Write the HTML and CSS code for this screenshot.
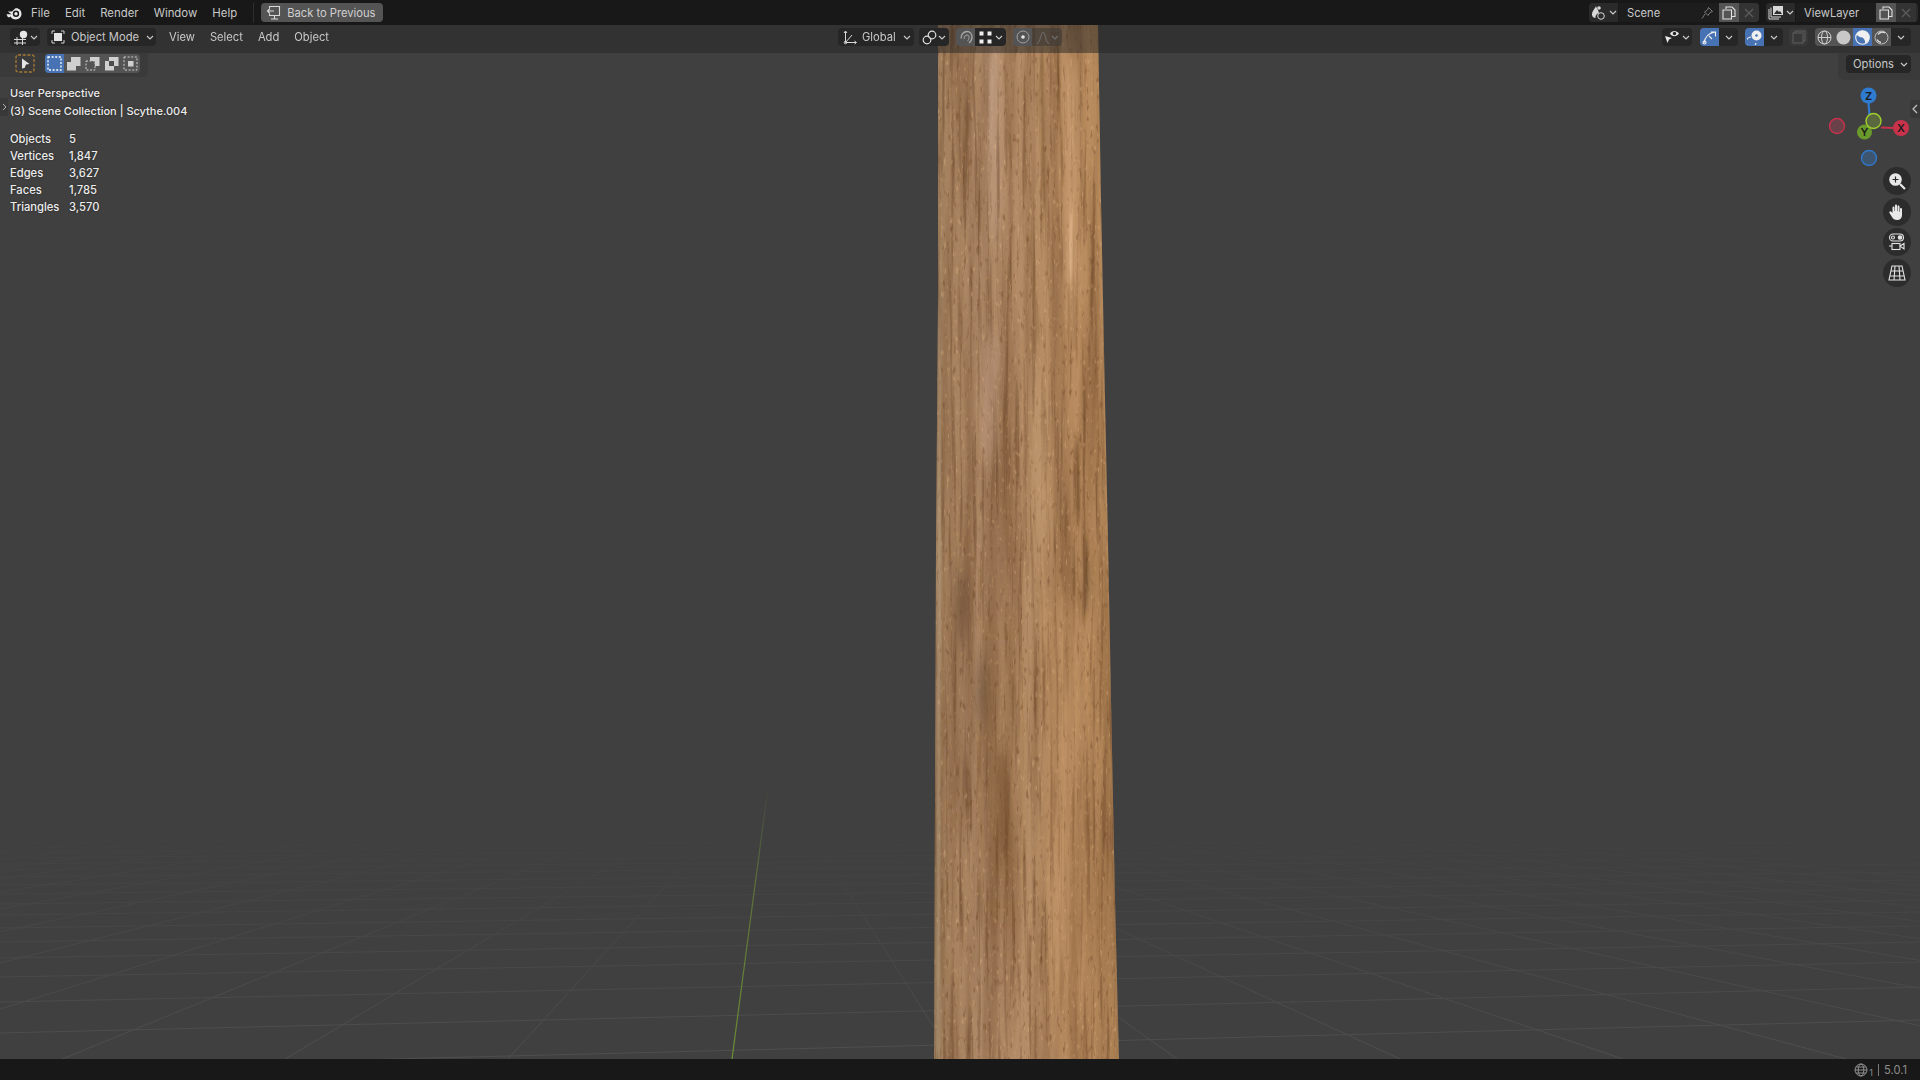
FILE: index.html
```html
<!DOCTYPE html>
<html lang="en">
<head>
    <meta charset="UTF-8">
    <title>Blender</title>
    <link rel="stylesheet" href="styles.css">
</head>
<body>
    <svg class="defs" width="0" height="0">
        <symbol id="chev" viewBox="0 0 8 5"><path d="M1 1l3 3 3-3" fill="none" stroke="currentColor" stroke-width="1.2"/></symbol>
    </svg>

    <!-- top bar -->
    <div class="topbar">
        <svg class="logo" width="16" height="16" viewBox="0 0 16 16">
            <path d="M0.5 9.3L5.5 9.2 1.8 6.4 6 6.4 9.5 3.2C12.8 2.7 15.5 5.2 15.5 8.7 15.5 12 13 14.4 9.8 14.4 7.4 14.4 5.4 13.2 4.6 11.4L3 12.6 1.6 11.8Z" fill="#e8e8e8"/>
            <circle cx="10" cy="8.8" r="3.2" fill="#181818"/>
            <circle cx="10" cy="8.8" r="1.7" fill="#e8e8e8"/>
        </svg>
        <nav class="menu top-menu">
            <span>File</span><span>Edit</span><span>Render</span><span>Window</span><span>Help</span>
        </nav>
        <div class="top-sep"></div>
        <div class="back-btn">
            <svg width="15" height="15" viewBox="0 0 15 15" fill="none" stroke="#d8d8d8" stroke-width="1.1">
                <path d="M3.5 3V1.5h10v9h-10V9M5 14h7M8.5 10.5V14"/>
                <path d="M8 6H1.5M4 3.5L1.5 6 4 8.500"/>
            </svg>
            <span>Back to Previous</span>
        </div>
        <div class="spacer"></div>
        <div class="datablock scene-block">
            <div class="db-icon">
                <svg width="16" height="15" viewBox="0 0 16 15">
                    <path d="M5 1C4 4 1 6 1 9.500 1 11.500 2.500 13 4.500 13 4 11 5.500 8.500 8 8 7.500 5 5.500 3.500 5 1Z" fill="#d8d8d8"/>
                    <circle cx="8" cy="3" r="1.800" fill="#d8d8d8"/>
                    <circle cx="10" cy="11" r="3.300" fill="none" stroke="#d8d8d8" stroke-width="1"/>
                </svg>
                <svg class="chev" width="8" height="5"><use href="#chev"/></svg>
            </div>
            <div class="db-field scene-field">
                <span>Scene</span>
                <svg width="13" height="14" viewBox="0 0 13 14" fill="none" stroke="#7c7c7c" stroke-width="1"><path d="M7.500 1.500l4 4-2.500 1-2 3-3.500-3.500 3-2zM4 8l-3 4.500"/></svg>
            </div>
            <div class="db-btn db-copy"><svg width="14" height="14" viewBox="0 0 14 14" fill="none" stroke="#e0e0e0" stroke-width="1.100"><path d="M4 3V1h6l3 3v6.500h-3M1 4h8.500v9H1z"/></svg></div>
            <div class="db-btn db-close"><svg width="10" height="10" viewBox="0 0 10 10" stroke="#5c5c5c" stroke-width="1.200"><path d="M1 1l8 8M9 1l-8 8"/></svg></div>
        </div>
        <div class="datablock layer-block">
            <div class="db-icon">
                <svg width="16" height="15" viewBox="0 0 16 15" fill="none" stroke="#d8d8d8" stroke-width="1">
                    <path d="M1 4v10h10M3 2.500v9.500h10"/>
                    <rect x="5" y="1" width="10" height="9" fill="#d8d8d8" stroke="none"/>
                    <path d="M6 9l3-4 2 2 1-1 2 3z" fill="#282828" stroke="none"/>
                </svg>
                <svg class="chev" width="8" height="5"><use href="#chev"/></svg>
            </div>
            <div class="db-field layer-field"><span>ViewLayer</span></div>
            <div class="db-btn db-copy"><svg width="14" height="14" viewBox="0 0 14 14" fill="none" stroke="#e0e0e0" stroke-width="1.100"><path d="M4 3V1h6l3 3v6.500h-3M1 4h8.500v9H1z"/></svg></div>
            <div class="db-btn db-close"><svg width="10" height="10" viewBox="0 0 10 10" stroke="#5c5c5c" stroke-width="1.200"><path d="M1 1l8 8M9 1l-8 8"/></svg></div>
        </div>
    </div>

    <!-- 3d viewport -->
    <main class="viewport">
        <svg class="scene" width="1920" height="1034" viewBox="0 25 1920 1034">
            <defs>
                <linearGradient id="fade" gradientUnits="userSpaceOnUse" x1="0" y1="815" x2="0" y2="1059">
                    <stop offset="0" stop-color="#fff" stop-opacity="0"/>
                    <stop offset="0.3" stop-color="#fff" stop-opacity="0.3"/>
                    <stop offset="0.7" stop-color="#fff" stop-opacity="0.7"/>
                    <stop offset="1" stop-color="#fff"/>
                </linearGradient>
                <mask id="gridMask" maskUnits="userSpaceOnUse" x="0" y="25" width="1920" height="1034">
                    <rect x="0" y="25" width="1920" height="1034" fill="url(#fade)"/>
                </mask>
                <linearGradient id="greenFade" gradientUnits="userSpaceOnUse" x1="0" y1="785" x2="0" y2="1059">
                    <stop offset="0" stop-color="#6d8f35" stop-opacity="0"/>
                    <stop offset="0.35" stop-color="#6d8f35" stop-opacity="0.6"/>
                    <stop offset="1" stop-color="#6d8f35"/>
                </linearGradient>
                <linearGradient id="woodBase" x1="0" x2="1" y1="0" y2="0">
                    <stop offset="0" stop-color="#8c7a64"/>
                    <stop offset="0.025" stop-color="#9c7d5c"/>
                    <stop offset="0.1" stop-color="#a78260"/>
                    <stop offset="0.3" stop-color="#b08b6a"/>
                    <stop offset="0.55" stop-color="#b58c65"/>
                    <stop offset="0.8" stop-color="#ba8d60"/>
                    <stop offset="0.95" stop-color="#ae8356"/>
                    <stop offset="1" stop-color="#9a7a52"/>
                </linearGradient>
                <clipPath id="handle">
                    <path d="M938 25L1098 25 1101 200 1105 400 1108 540 1111 700 1115 900 1119 1059 934 1059 935 800 936 540 938 300Z"/>
                </clipPath>
                <filter id="grain" filterUnits="userSpaceOnUse" x="930" y="25" width="195" height="1034" color-interpolation-filters="sRGB">
                    <feTurbulence type="fractalNoise" baseFrequency="0.06 0.003" numOctaves="3" seed="11"/>
                    <feColorMatrix values="0 0 0 0 0.42  0 0 0 0 0.27  0 0 0 0 0.15  1.1 0 0 0 -0.42"/>
                </filter>
                <filter id="fibre" filterUnits="userSpaceOnUse" x="930" y="25" width="195" height="1034" color-interpolation-filters="sRGB">
                    <feTurbulence type="fractalNoise" baseFrequency="0.22 0.008" numOctaves="3" seed="31"/>
                    <feColorMatrix values="0 0 0 0 0.38  0 0 0 0 0.24  0 0 0 0 0.13  3 0 0 0 -1.55"/>
                </filter>
                <filter id="pores" filterUnits="userSpaceOnUse" x="930" y="25" width="195" height="1034" color-interpolation-filters="sRGB">
                    <feTurbulence type="fractalNoise" baseFrequency="0.3 0.09" numOctaves="2" seed="4"/>
                    <feColorMatrix values="0 0 0 0 0.44  0 0 0 0 0.28  0 0 0 0 0.16  5 0 0 0 -3.1"/>
                </filter>
                <filter id="flecks" filterUnits="userSpaceOnUse" x="930" y="25" width="195" height="1034" color-interpolation-filters="sRGB">
                    <feTurbulence type="fractalNoise" baseFrequency="0.34 0.12" numOctaves="2" seed="23"/>
                    <feColorMatrix values="0 0 0 0 0.9  0 0 0 0 0.72  0 0 0 0 0.52  0 5 0 0 -3.2"/>
                </filter>
                <filter id="soften"><feGaussianBlur stdDeviation="0.6"/></filter>
                <filter id="blurS"><feGaussianBlur stdDeviation="1.2 8"/></filter>
                <filter id="blurM"><feGaussianBlur stdDeviation="3.500 14"/></filter>
                <filter id="blurL"><feGaussianBlur stdDeviation="6 20"/></filter>
            </defs>

            <rect x="0" y="25" width="1920" height="1034" fill="#404040"/>

            <g mask="url(#gridMask)" stroke="#4f4f4f" stroke-width="1">
                <path fill="none" d="M0 1069L1920 1020M0 1033L1920 987M0 1002L1920 962M0 977L1920 942M0 958L1920 926M0 942L1920 912M0 928L1920 900M0 915L1920 889M0 904L1920 880M0 894L1920 872M0 885L1920 864M0 877L1920 857M0 870L1920 851M0 864L1920 846M0 858L1920 841M0 853L1920 837M0 848L1920 833"/>
                <path fill="none" d="M771 770L-2391 1059M771 770L-2168 1059M771 770L-1945 1059M771 770L-1722 1059M771 770L-1499 1059M771 770L-1276 1059M771 770L-1053 1059M771 770L-830 1059M771 770L-607 1059M771 770L-384 1059M771 770L-161 1059M771 770L62 1059M771 770L285 1059M771 770L508 1059"/>
                <path fill="none" d="M771 770L954 1059M771 770L1177 1059M771 770L1400 1059M771 770L1623 1059M771 770L1846 1059M771 770L2069 1059M771 770L2292 1059M771 770L2515 1059M771 770L2738 1059M771 770L2961 1059M771 770L3184 1059M771 770L3407 1059M771 770L3630 1059M771 770L3853 1059"/>
            </g>
            <path d="M768 787L732 1059" stroke="url(#greenFade)" stroke-width="1.200" fill="none"/>

            <g clip-path="url(#handle)">
                <rect x="930" y="25" width="195" height="1034" fill="url(#woodBase)"/>
                <g filter="url(#soften)">
                    <rect x="930" y="25" width="195" height="1034" filter="url(#grain)"/>
                    <rect x="930" y="25" width="195" height="1034" filter="url(#fibre)" opacity="0.55"/>
                    <rect x="930" y="25" width="195" height="1034" filter="url(#pores)" opacity="0.45"/>
                    <rect x="930" y="25" width="195" height="1034" filter="url(#flecks)" opacity="0.35"/>
                </g>

                <!-- light streaks -->
                <g filter="url(#blurM)">
                    <path d="M986 40L1000 40 998 250 990 230Z" fill="#cfae96" opacity="0.42"/>
                    <path d="M985 330L1000 340 995 470 982 450Z" fill="#c7a68e" opacity="0.4"/>
                    <path d="M1066 60L1078 60 1076 330 1066 330Z" fill="#d9ae80" opacity="0.42"/>
                    <path d="M1030 380L1045 380 1052 540 1034 540Z" fill="#cda57a" opacity="0.3"/>
                    <path d="M1040 600L1080 600 1090 1000 1050 1000Z" fill="#c99a6a" opacity="0.3"/>
                </g>
                <g filter="url(#blurS)">
                    <path d="M1070 210L1073 210 1072 280 1068 280Z" fill="#eec59a" opacity="0.55"/>
                    <path d="M991 60L993 60 992 150 990 150Z" fill="#dcc0aa" opacity="0.4"/>
                    <path d="M939 250L941 250 940 1059 936 1059Z" fill="#c0ad92" opacity="0.5"/>
                </g>
                <!-- dark knots and grain -->
                <g filter="url(#blurM)">
                    <path d="M978 660L988 660 986 720 976 720Z" fill="#665038" opacity="0.55"/>
                    <path d="M994 750L1008 750 1012 860 998 860Z" fill="#70492a" opacity="0.55"/>
                    <path d="M957 580L968 580 966 640 958 640Z" fill="#5e432c" opacity="0.6"/>
                    <path d="M1084 555L1092 555 1090 605 1084 605Z" fill="#664a30" opacity="0.55"/>
                </g>
                <g filter="url(#blurS)">
                    <path d="M966 100L969 100 967 190 965 190Z" fill="#5c3d22" opacity="0.55"/>
                    <path d="M1040 50L1043 50 1046 210 1043 210Z" fill="#6e4a28" opacity="0.55"/>
                    <path d="M1056 50L1058 50 1064 180 1062 180Z" fill="#6e4a28" opacity="0.45"/>
                    <path d="M1076 440L1078 440 1080 520 1077 520Z" fill="#5c3a1e" opacity="0.7"/>
                    <path d="M1003 60L1005 60 1012 160 1010 160Z" fill="#7a5430" opacity="0.45"/>
                    <path d="M1029 240L1031 240 1040 340 1038 340Z" fill="#6e4a28" opacity="0.45"/>
                    <path d="M1085 540L1088 540 1087 610 1085 610Z" fill="#5c3a1e" opacity="0.55"/>
                </g>
                <g filter="url(#blurL)">
                    <path d="M950 560L975 560 970 800 945 800Z" fill="#6e4e2e" opacity="0.22"/>
                    <path d="M980 640L1020 640 1020 900 985 900Z" fill="#75502b" opacity="0.2"/>
                </g>
            </g>
        </svg>

        <header class="header">
            <div class="h-left">
                <div class="btn editor-btn">
                    <svg width="16" height="15" viewBox="0 0 16 15">
                        <path d="M1 9.500h12M1 13h12M4 7v8M9.500 7v8" fill="none" stroke="#d8d8d8" stroke-width="1"/>
                        <circle cx="10.500" cy="4.500" r="3.700" fill="#e8e8e8"/>
                    </svg>
                    <svg class="chev" width="8" height="5"><use href="#chev"/></svg>
                </div>
                <div class="btn mode-btn">
                    <svg width="14" height="14" viewBox="0 0 14 14"><path d="M1 4V1h3M10 1h3v3M13 10v3h-3M4 13H1v-3" fill="none" stroke="#cfcfcf" stroke-width="1"/><rect x="3" y="3" width="8" height="8" fill="#e4e4e4"/></svg>
                    <span>Object Mode</span>
                    <svg class="chev" width="8" height="5"><use href="#chev"/></svg>
                </div>
                <nav class="menu head-menu">
                    <span>View</span><span>Select</span><span>Add</span><span>Object</span>
                </nav>
            </div>
            <div class="h-center">
                <div class="btn orient-btn">
                    <svg width="14" height="15" viewBox="0 0 14 15" fill="none" stroke="#d8d8d8" stroke-width="1"><path d="M2.500 12.500V1.500M1 3l1.500-2L4 3M2.500 12.500H13M11.500 11l2 1.500-2 1.500M2.500 12.500L9 5"/><circle cx="2.500" cy="12.500" r="1.300"/></svg>
                    <span>Global</span>
                    <svg class="chev" width="8" height="5"><use href="#chev"/></svg>
                </div>
                <div class="btn pivot-btn">
                    <svg width="15" height="15" viewBox="0 0 15 15" fill="none" stroke="#e0e0e0" stroke-width="1.200"><circle cx="5" cy="10" r="3.800"/><circle cx="10" cy="5" r="3.800"/></svg>
                    <svg class="chev" width="8" height="5"><use href="#chev"/></svg>
                </div>
                <div class="snap-group">
                    <div class="btn magnet-btn">
                        <svg width="14" height="14" viewBox="0 0 14 14" fill="none" stroke="#a8a8a8" stroke-width="1.300"><path d="M2 8.500C2 4 5 1.500 8 1.500 11 1.500 13 4 13 7 13 10 12 11.500 10 13"/><path d="M5 9C5 6.500 6.500 5 8 5 9.500 5 10 6 10 7.500 10 9 9.500 10 8.500 11" stroke-width="1"/></svg>
                    </div>
                    <div class="btn snap-btn">
                        <svg width="13" height="13" viewBox="0 0 13 13" fill="#f0f0f0"><rect x="0.500" y="0.500" width="4" height="4"/><rect x="8.500" y="0.500" width="4" height="4"/><rect x="0.500" y="8.500" width="4" height="4"/><rect x="8.500" y="8.500" width="4" height="4"/></svg>
                        <svg class="chev" width="8" height="5"><use href="#chev"/></svg>
                    </div>
                </div>
                <div class="snap-group">
                    <div class="btn prop-btn">
                        <svg width="14" height="14" viewBox="0 0 14 14"><circle cx="7" cy="7" r="6" fill="none" stroke="#a0a0a0" stroke-width="1"/><circle cx="7" cy="7" r="1.800" fill="#e8e8e8"/></svg>
                    </div>
                    <div class="btn falloff-btn">
                        <svg width="14" height="13" viewBox="0 0 14 13" fill="none" stroke="#6e6e6e" stroke-width="1"><path d="M1 12.500C4 12.500 5 1 7 1 9 1 10 12.500 13 12.500"/></svg>
                        <svg class="chev dim" width="8" height="5"><use href="#chev"/></svg>
                    </div>
                </div>
            </div>
            <div class="h-right">
                <div class="btn vis-btn">
                    <svg width="16" height="14" viewBox="0 0 16 14"><path d="M6 3.500C8 0 12.500 0 15 3.500 12.500 7 8 7 6 3.500Z" fill="#e8e8e8"/><circle cx="10.500" cy="3.500" r="1.700" fill="#222"/><path d="M1 6l7 2-3 1.500-1.500 3.500z" fill="#e8e8e8"/></svg>
                    <svg class="chev" width="8" height="5"><use href="#chev"/></svg>
                </div>
                <div class="snap-group gizmo-toggle">
                    <div class="btn active icon-btn">
                        <svg width="15" height="15" viewBox="0 0 15 15" fill="none" stroke="#f0f0f0" stroke-width="1.100"><path d="M2 13C3 7 7 3 13 2M9 2h4.500v4.500M7 6l3 3"/><circle cx="2.500" cy="12.500" r="1.500"/></svg>
                    </div>
                    <div class="btn arrow-btn"><svg class="chev" width="8" height="5"><use href="#chev"/></svg></div>
                </div>
                <div class="snap-group overlay-toggle">
                    <div class="btn active icon-btn">
                        <svg width="15" height="15" viewBox="0 0 15 15"><circle cx="9.500" cy="5.500" r="5" fill="#f0f0f0"/><circle cx="9.500" cy="5.500" r="1.300" fill="#4772b3"/><path d="M4 7a5 5 0 1 0 5 6" fill="none" stroke="#f0f0f0" stroke-width="1.200"/></svg>
                    </div>
                    <div class="btn arrow-btn"><svg class="chev" width="8" height="5"><use href="#chev"/></svg></div>
                </div>
                <div class="btn xray-btn">
                    <svg width="14" height="14" viewBox="0 0 14 14" fill="none" stroke="#5e5e5e" stroke-width="1"><rect x="1" y="3" width="10" height="10"/><path d="M3 3V1h10v10h-2"/></svg>
                </div>
                <div class="shade-group">
                    <div class="btn shade-btn">
                        <svg width="15" height="15" viewBox="0 0 15 15" fill="none" stroke="#cfcfcf" stroke-width="1"><circle cx="7.500" cy="7.500" r="6.500"/><ellipse cx="7.500" cy="7.500" rx="3" ry="6.500"/><path d="M1 7.500h13"/></svg>
                    </div>
                    <div class="btn shade-btn">
                        <svg width="15" height="15" viewBox="0 0 15 15"><circle cx="7.500" cy="7.500" r="7" fill="#c8c8c8"/></svg>
                    </div>
                    <div class="btn shade-btn active">
                        <svg width="15" height="15" viewBox="0 0 15 15"><circle cx="7.500" cy="7.500" r="6.800" fill="none" stroke="#f0f0f0" stroke-width="1.100"/><path d="M7.500 .7A6.800 6.800 0 0 1 14.300 7.500 6.800 6.800 0 0 1 10 13.800C10.500 11 9.500 9 7.500 7.500 4.500 7.500 2.500 6 1.500 4.500A6.800 6.800 0 0 1 7.500 .7Z" fill="#f0f0f0"/></svg>
                    </div>
                    <div class="btn shade-btn">
                        <svg width="15" height="15" viewBox="0 0 15 15" fill="none" stroke="#bcbcbc" stroke-width="1"><circle cx="7.500" cy="7.500" r="6.500"/><path d="M3 9.500a5 5 0 0 0 4 3M4 4.500a5 5 0 0 1 7-1.500" stroke="#e0e0e0" stroke-width="1.400"/></svg>
                    </div>
                    <div class="btn arrow-btn shade-arrow"><svg class="chev" width="8" height="5"><use href="#chev"/></svg></div>
                </div>
            </div>
        </header>

        <div class="tool-row">
            <div class="tool-left">
                <div class="tool-active">
                    <svg class="tool-frame" width="20" height="19" viewBox="0 0 20 19"><rect x="1" y="1" width="18" height="17" rx="2" fill="none" stroke="#a67a34" stroke-width="1.300" stroke-dasharray="3 1.700"/></svg>
                    <svg width="9" height="11" viewBox="0 0 9 11"><path d="M1 0.500L8.500 6 5 6.400 3.600 10 1 10.500Z" fill="#e4e4e4"/></svg>
                </div>
                <div class="select-modes">
                    <div class="sel-btn sel-on">
                        <svg width="15" height="15" viewBox="0 0 15 15"><rect x="1" y="1" width="13" height="13" fill="none" stroke="#fff" stroke-width="1.300" stroke-dasharray="2 1.600"/></svg>
                    </div>
                    <div class="sel-btn">
                        <svg width="15" height="15" viewBox="0 0 15 15" fill="#cfcfcf"><path d="M1 6h4V1h9.500v9H10v4.500H1z"/></svg>
                    </div>
                    <div class="sel-btn">
                        <svg width="15" height="15" viewBox="0 0 15 15"><rect x="1" y="5" width="9" height="9" fill="none" stroke="#cfcfcf" stroke-dasharray="2 1.500"/><path d="M5 1h9.500v9H10V5H5z" fill="#cfcfcf"/></svg>
                    </div>
                    <div class="sel-btn">
                        <svg width="15" height="15" viewBox="0 0 15 15"><path d="M1 5h4V1h9.500v9H10v4.500H1z" fill="#cfcfcf"/><rect x="5" y="5" width="5" height="5" fill="#4d4d4d"/></svg>
                    </div>
                    <div class="sel-btn">
                        <svg width="15" height="15" viewBox="0 0 15 15"><rect x="1" y="1" width="13" height="13" fill="none" stroke="#cfcfcf" stroke-dasharray="2 1.600"/><rect x="5" y="5" width="5.500" height="5.500" fill="#cfcfcf"/></svg>
                    </div>
                </div>
            </div>
            <div class="tool-right">
                <div class="btn options-btn">
                    <span>Options</span>
                    <svg class="chev" width="8" height="5"><use href="#chev"/></svg>
                </div>
            </div>
        </div>

        <div class="info">
            <div class="info-line">User Perspective</div>
            <div class="info-line">(3) Scene Collection | Scythe.004</div>
            <div class="stats">
                <span>Objects</span><span>5</span>
                <span>Vertices</span><span>1,847</span>
                <span>Edges</span><span>3,627</span>
                <span>Faces</span><span>1,785</span>
                <span>Triangles</span><span>3,570</span>
            </div>
        </div>

        <div class="side-tab left-tab">
            <svg width="5" height="8" viewBox="0 0 5 8" fill="none" stroke="#b0b0b0" stroke-width="1"><path d="M1 1l3 3-3 3"/></svg>
        </div>
        <div class="side-tab right-tab">
            <svg width="6" height="10" viewBox="0 0 6 10" fill="none" stroke="#c4c4c4" stroke-width="1.200"><path d="M5 1L1 5l4 4"/></svg>
        </div>

        <svg class="gizmo" width="90" height="100" viewBox="1825 85 90 100">
            <path d="M1868.500 103L1869.500 116" stroke="#2f7bd0" stroke-width="2.200"/>
            <path d="M1881 127.500L1894 128" stroke="#c8324a" stroke-width="2.200"/>
            <circle cx="1837" cy="126" r="7.500" fill="#6a4049" stroke="#c8324c" stroke-width="1.400"/>
            <circle cx="1869" cy="158" r="7.500" fill="#3e5570" stroke="#2f78cc" stroke-width="1.400"/>
            <circle cx="1868.500" cy="95.500" r="8" fill="#2f7bd0"/>
            <circle cx="1901" cy="128" r="8" fill="#c8324a"/>
            <circle cx="1864.500" cy="132" r="7.500" fill="#6b9a2c"/>
            <circle cx="1873.500" cy="121" r="7.500" fill="#5a6840" stroke="#a3cf2c" stroke-width="1.400"/>
            <text class="axis" x="1868.500" y="99.500">Z</text>
            <text class="axis" x="1901" y="132">X</text>
            <text class="axis" x="1864.500" y="136">Y</text>
        </svg>

        <div class="nav-btns">
            <div class="nav-btn">
                <svg width="18" height="18" viewBox="0 0 18 18"><circle cx="7.500" cy="7.500" r="6.300" fill="#e8e8e8"/><path d="M7.500 4.500v6M4.500 7.500h6" stroke="#2b2b2b" stroke-width="1.200"/><path d="M12 12l5 5" stroke="#e8e8e8" stroke-width="2.200"/></svg>
            </div>
            <div class="nav-btn">
                <svg width="18" height="18" viewBox="0 0 18 18"><path d="M4.500 4.500c0-1.500 2-1.500 2 0V8h.5V2.500c0-1.500 2-1.500 2 0V8h.5V3.500c0-1.500 2-1.500 2 0V9h.5V6c0-1.500 2-1.500 2 0v6c0 3-2 5-5 5-2.500 0-4-1-5-3L1.500 10c-.8-1.500 1-2.500 2-1.300L4.500 10z" fill="#e8e8e8"/></svg>
            </div>
            <div class="nav-btn">
                <svg width="18" height="18" viewBox="0 0 18 18" fill="none" stroke="#e4e4e4" stroke-width="1.100"><rect x="1.500" y="1" width="14" height="7" rx="3.500"/><circle cx="5" cy="4.500" r="1.500"/><circle cx="12" cy="4.500" r="1.800" fill="#e4e4e4"/><rect x="4" y="10.500" width="8" height="6"/><path d="M12 13l4-2.500v5.500zM1 13h3"/></svg>
            </div>
            <div class="nav-btn">
                <svg width="18" height="16" viewBox="0 0 18 16" fill="none" stroke="#e4e4e4" stroke-width="1.100"><path d="M4 1h10l3 14H1zM1.800 11h14.400M3 6h12M7 1L6 15M11 1l1 14"/></svg>
            </div>
        </div>
    </main>

    <!-- status bar -->
    <footer class="statusbar">
        <svg width="14" height="14" viewBox="0 0 14 14" fill="none" stroke="#909090" stroke-width="1"><circle cx="7" cy="7" r="6"/><ellipse cx="7" cy="7" rx="2.800" ry="6"/><path d="M1 7h12M2 4h10M2 10h10"/></svg>
        <span class="net-count">1</span>
        <span class="status-sep"></span>
        <span>5.0.1</span>
    </footer>
</body>
</html>
```

FILE: styles.css
```css
* {
    box-sizing: border-box;
}
html, body {
    height: 100%;
}
body {
    margin: 0;
    display: flex;
    flex-direction: column;
    overflow: hidden;
    background: #181818;
    color: #c8c8c8;
    font-family: Inter, "Noto Sans", sans-serif;
    font-size: 11.2px;
    white-space: nowrap;
}
svg {
    display: block;
    flex: none;
}
.defs {
    position: absolute;
}
.chev {
    color: #c8c8c8;
}
.chev.dim {
    color: #6e6e6e;
}
.spacer {
    flex: 1;
}
.menu {
    display: flex;
    gap: 15px;
}

/* top bar */
.topbar {
    height: 25px;
    flex: none;
    display: flex;
    align-items: center;
    padding: 0 2px 0 6px;
    background: #181818;
}
.logo {
    margin-right: 9px;
}
.top-menu {
    font-size: 11.4px;
}
.top-sep {
    width: 1px;
    height: 20px;
    margin: 0 7px 0 16px;
    background: #2e2e2e;
}
.back-btn {
    width: 122px;
    height: 19px;
    display: flex;
    align-items: center;
    gap: 6px;
    padding-left: 5px;
    background: #545454;
    border-radius: 4px;
    color: #d0d0d0;
}
.datablock {
    height: 19px;
    display: flex;
    background: #2a2a2a;
    border-radius: 4px;
    overflow: hidden;
}
.scene-block {
    width: 170px;
    margin-right: 7px;
}
.layer-block {
    width: 152px;
}
.db-icon {
    width: 30px;
    display: flex;
    align-items: center;
    justify-content: center;
    gap: 2px;
    background: #2a2a2a;
    border-right: 1px solid #181818;
}
.db-field {
    display: flex;
    align-items: center;
    justify-content: space-between;
    padding: 0 5px 0 8px;
    background: #1d1d1d;
}
.scene-field {
    width: 100px;
}
.layer-field {
    width: 80px;
}
.db-btn {
    width: 20px;
    display: flex;
    align-items: center;
    justify-content: center;
}
.db-copy {
    background: #545454;
}
.db-close {
    background: #333;
}

/* viewport */
.viewport {
    position: relative;
    flex: 1;
    min-height: 0;
}
.scene {
    position: absolute;
    inset: 0;
}
.header {
    position: relative;
    height: 28px;
    display: grid;
    grid-template-columns: 1fr auto 1fr;
    align-items: start;
    padding-top: 3px;
    background: rgba(35, 35, 35, 0.5);
}
.h-left,
.h-center,
.h-right {
    display: flex;
    align-items: center;
    height: 18px;
}
.h-left {
    padding-left: 10px;
    gap: 7px;
}
.h-center {
    gap: 7px;
    margin-right: 20px;
}
.h-right {
    justify-content: flex-end;
    padding-right: 9px;
    gap: 7px;
}
.btn {
    height: 18px;
    display: flex;
    align-items: center;
    justify-content: center;
    background: #262626;
    border-radius: 4px;
    color: #c8c8c8;
}
.editor-btn {
    width: 30px;
    gap: 1px;
}
.mode-btn {
    width: 109px;
    justify-content: flex-start;
    padding-left: 4px;
    gap: 6px;
}
.mode-btn .chev {
    margin-left: auto;
    margin-right: 2px;
}
.head-menu {
    margin-left: 6px;
}
.orient-btn {
    width: 76px;
    justify-content: flex-start;
    padding-left: 5px;
    gap: 5px;
}
.orient-btn .chev {
    margin-left: auto;
    margin-right: 3px;
}
.pivot-btn {
    width: 30px;
    gap: 1px;
    margin-left: -2px;
}
.snap-group,
.shade-group {
    display: flex;
}
.snap-group .btn,
.shade-group .btn {
    border-radius: 0;
}
.snap-group .btn:first-child,
.shade-group .btn:first-child {
    border-radius: 4px 0 0 4px;
}
.snap-group .btn:last-child,
.shade-group .btn:last-child {
    border-radius: 0 4px 4px 0;
}
.magnet-btn,
.prop-btn {
    width: 19px;
    background: #545454;
}
.snap-btn {
    width: 31px;
    gap: 3px;
}
.falloff-btn {
    width: 30px;
    gap: 1px;
    background: rgba(50, 50, 50, 0.45);
}
.vis-btn {
    width: 30px;
    gap: 2px;
}
.gizmo-toggle {
    margin-left: 1px;
}
.overlay-toggle {
    margin-right: -1px;
}
.icon-btn {
    width: 19px;
}
.arrow-btn {
    width: 19px;
}
.active {
    background: #4772b3;
}
.xray-btn {
    width: 19px;
    background: #383838;
}
.shade-btn {
    width: 19px;
    background: #545454;
}
.shade-btn.active {
    background: #4772b3;
}
.shade-arrow {
    width: 20px;
    background: #262626;
}

/* tool settings row */
.tool-row {
    position: relative;
    display: flex;
    justify-content: space-between;
    align-items: flex-start;
}
.tool-left {
    width: 148px;
    height: 24px;
    display: flex;
    align-items: flex-start;
    padding: 1px 0 0 15px;
    background: rgba(35, 35, 35, 0.22);
    border-radius: 0 0 6px 0;
}
.tool-active {
    position: relative;
    width: 20px;
    height: 19px;
    display: flex;
    align-items: center;
    justify-content: center;
    margin-right: 10px;
}
.tool-frame {
    position: absolute;
    inset: 0;
}
.select-modes {
    display: flex;
    background: #545454;
    border-radius: 4px;
}
.sel-btn {
    width: 19px;
    height: 19px;
    display: flex;
    align-items: center;
    justify-content: center;
}
.sel-on {
    background: #4772b3;
    border-radius: 4px 0 0 4px;
}
.tool-right {
    width: 82px;
    height: 27px;
    display: flex;
    justify-content: flex-end;
    padding: 2px 9px 0 0;
    background: rgba(35, 35, 35, 0.18);
    border-radius: 0 0 0 6px;
}
.options-btn {
    width: 65px;
    height: 18px;
    justify-content: flex-start;
    padding-left: 7px;
    gap: 6px;
}

/* viewport text */
.info {
    position: relative;
    width: 300px;
    margin-top: 4px;
    padding-left: 10px;
    color: #ececec;
    text-shadow: 0 0 2px #222;
    font-weight: 500;
    font-size: 11px;
}
.info-line {
    height: 18px;
    line-height: 18px;
}
.stats {
    display: grid;
    grid-template-columns: 59px auto;
    justify-content: start;
    grid-auto-rows: 17px;
    line-height: 17px;
    margin-top: 11px;
    font-size: 11.2px;
}
.side-tab {
    position: absolute;
    display: flex;
    align-items: center;
    justify-content: center;
    background: #383838;
}
.left-tab {
    left: 0;
    top: 73px;
    width: 8px;
    height: 18px;
    border-radius: 0 3px 3px 0;
}
.right-tab {
    right: 0;
    top: 75px;
    width: 10px;
    height: 18px;
    border-radius: 3px 0 0 3px;
}
.gizmo {
    position: absolute;
    left: 1825px;
    top: 60px;
}
.axis {
    font-family: Inter, sans-serif;
    font-size: 11px;
    font-weight: 600;
    fill: #1a1a1a;
    text-anchor: middle;
}
.nav-btns {
    position: absolute;
    right: 9px;
    top: 142px;
    display: flex;
    flex-direction: column;
    gap: 2.5px;
}
.nav-btn {
    width: 28px;
    height: 28px;
    display: flex;
    align-items: center;
    justify-content: center;
    background: #2c2c2c;
    border-radius: 50%;
}

/* status bar */
.statusbar {
    height: 21px;
    flex: none;
    display: flex;
    align-items: center;
    justify-content: flex-end;
    padding-right: 13px;
    background: #181818;
    color: #8c8c8c;
    font-size: 11.2px;
}
.net-count {
    font-size: 9px;
    margin: 6px 0 0 1px;
}
.status-sep {
    width: 1px;
    height: 12px;
    margin: 0 5px;
    background: #7a7a7a;
}
```
